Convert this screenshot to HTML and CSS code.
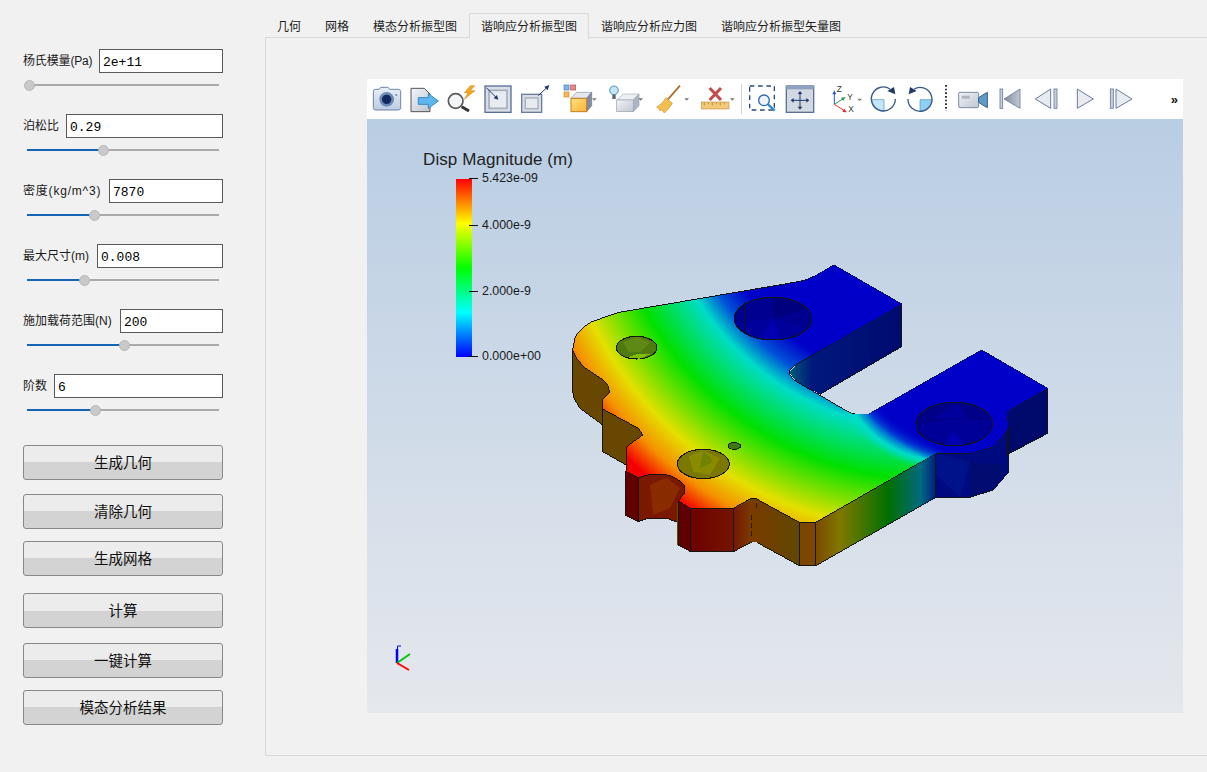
FILE: index.html
```html
<!DOCTYPE html>
<html lang="zh">
<head>
<meta charset="utf-8">
<title>谐响应分析</title>
<link rel="stylesheet" href="styles.css">
</head>
<body>
<div class="app">
  <aside class="side">
    <div class="field">
      <div class="row"><label class="lbl l-e">杨氏模量(Pa)</label><input class="inp" value="2e+11"></div>
      <div class="slider slider-first"><div class="fill" style="width:1px"><span class="thumb"></span></div></div>
    </div>
    <div class="field">
      <div class="row"><label class="lbl l-p">泊松比</label><input class="inp" value="0.29"></div>
      <div class="slider"><div class="fill" style="width:76px"><span class="thumb"></span></div></div>
    </div>
    <div class="field">
      <div class="row"><label class="lbl l-d">密度(kg/m^3)</label><input class="inp" value="7870"></div>
      <div class="slider"><div class="fill" style="width:67.5px"><span class="thumb"></span></div></div>
    </div>
    <div class="field">
      <div class="row"><label class="lbl l-s">最大尺寸(m)</label><input class="inp" value="0.008"></div>
      <div class="slider"><div class="fill" style="width:57.5px"><span class="thumb"></span></div></div>
    </div>
    <div class="field">
      <div class="row"><label class="lbl l-n">施加载荷范围(N)</label><input class="inp" value="200"></div>
      <div class="slider"><div class="fill" style="width:97px"><span class="thumb"></span></div></div>
    </div>
    <div class="field">
      <div class="row"><label class="lbl l-o">阶数</label><input class="inp" value="6"></div>
      <div class="slider"><div class="fill" style="width:68.5px"><span class="thumb"></span></div></div>
    </div>
    <div class="btns">
      <button class="btn">生成几何</button>
      <button class="btn gap14">清除几何</button>
      <button class="btn gap12">生成网格</button>
      <button class="btn gap17">计算</button>
      <button class="btn gap15">一键计算</button>
      <button class="btn gap12">模态分析结果</button>
    </div>
  </aside>

  <main class="main">
    <nav class="tabs">
      <span class="tab">几何</span>
      <span class="tab">网格</span>
      <span class="tab">模态分析振型图</span>
      <span class="tab tab-on">谐响应分析振型图</span>
      <span class="tab">谐响应分析应力图</span>
      <span class="tab">谐响应分析振型矢量图</span>
    </nav>
    <section class="pane">
      <div class="viewer">
        <div class="toolbar">
          <svg class="ic" viewBox="6 12 117 120">
            <defs><linearGradient id="gb" x1="0" y1="0" x2="0" y2="1"><stop offset="0" stop-color="#e9eff7"/><stop offset="1" stop-color="#bccde3"/></linearGradient>
            <linearGradient id="gg" x1="0" y1="0" x2="1" y2="1"><stop offset="0" stop-color="#f2f4f7"/><stop offset="1" stop-color="#bfc6d1"/></linearGradient>
            <linearGradient id="gy" x1="0" y1="0" x2="1" y2="1"><stop offset="0" stop-color="#ffe27a"/><stop offset="1" stop-color="#fbb13c"/></linearGradient>
            <linearGradient id="gt" x1="0" y1="0" x2="1" y2="0"><stop offset="0" stop-color="#7f8a9c"/><stop offset="1" stop-color="#c2c9d4"/></linearGradient></defs>
            <path d="M25 50 q0-7 7-7 h10 l5-6 h22 l5 6 h26 q7 0 7 7 v48 q0 7-7 7 h-68 q-7 0-7-7z" fill="url(#gb)" stroke="#6d85a8" stroke-width="3"/>
            <circle cx="65" cy="73" r="22" fill="#6d8ab5"/><circle cx="65" cy="73" r="14" fill="#14285f"/><circle cx="94" cy="60" r="3" fill="#6d85a8"/>
          </svg>
          <svg class="ic" viewBox="123 12 111 120">
            <path d="M138 40 h40 l17 17 v53 h-57z" fill="url(#gg)" stroke="#555" stroke-width="3"/>
            <path d="M160 68 h30 v-12 l30 22 -30 22 v-12 h-30z" fill="#5fb8ec" stroke="#2f88c8" stroke-width="3"/>
          </svg>
          <svg class="ic" viewBox="234 12 108 120">
            <path d="M316 32 l-18 21 h11 l-11 20 32-26 h-14 l13-15z" fill="#f5a623" stroke="#d08010" stroke-width="1.5"/>
            <circle cx="272" cy="78" r="22" fill="#f4f5f7" stroke="#5a5a5a" stroke-width="5"/>
            <path d="M290 95 L312 108" stroke="#333" stroke-width="9"/>
          </svg>
          <svg class="ic" viewBox="342 12 111 120">
            <rect x="360" y="33" width="78" height="79" fill="#d9dee6" stroke="#5a6f95" stroke-width="4"/>
            <rect x="372" y="46" width="54" height="54" fill="#e8ebf0" stroke="#a6aeba" stroke-width="5"/>
            <path d="M364 38 L394 68" stroke="#1f3a66" stroke-width="3"/><path d="M400 74 L386 70 L396 60z" fill="#1f3a66"/>
          </svg>
          <svg class="ic" viewBox="453 12 114 120">
            <rect x="470" y="58" width="60" height="54" fill="#d9dee6" stroke="#6b7d9b" stroke-width="4"/>
            <rect x="481" y="69" width="38" height="32" fill="#e8ebf0" stroke="#a6aeba" stroke-width="4"/>
            <path d="M520 62 L546 37" stroke="#1f3a66" stroke-width="3"/><path d="M553 30 L538 35 L548 46z" fill="#1f3a66"/>
          </svg>
          <svg class="ic ic-wide" viewBox="567 12 138 120">
            <rect x="597" y="30" width="15" height="15" fill="#7fb4e6" stroke="#3f7fc0" stroke-width="2"/>
            <rect x="617" y="30" width="15" height="15" fill="#e88a8a" stroke="#c04a4a" stroke-width="2"/>
            <rect x="597" y="51" width="15" height="15" fill="#f5b85a" stroke="#d08a2a" stroke-width="2"/>
            <path d="M618 70 L635 52 H680 L665 70z" fill="#e4e7ec" stroke="#8a97ab" stroke-width="2"/>
            <path d="M665 70 L680 52 V92 L665 110z" fill="#7f8da3" stroke="#6a788e" stroke-width="2"/>
            <rect x="618" y="70" width="47" height="40" fill="url(#gy)" stroke="#c77a20" stroke-width="3"/>
            <path class="drop" d="M681 70 h14 l-7 7z"/>
          </svg>
          <svg class="ic ic-wide" viewBox="705 12 150 120">
            <path d="M755 75 L775 57 H822 L805 75z" fill="#eceff3" stroke="#a8b0bc" stroke-width="2"/>
            <path d="M805 75 L822 57 V92 L805 110z" fill="#aeb6c3" stroke="#98a1af" stroke-width="2"/>
            <rect x="755" y="75" width="50" height="35" fill="url(#gg)" stroke="#98a1af" stroke-width="2"/>
            <circle cx="747" cy="46" r="13" fill="#c5e4f7" stroke="#4b90c0" stroke-width="3"/>
            <rect x="742" y="59" width="10" height="13" fill="#5a6472"/>
            <path class="drop" d="M820 70 h14 l-7 7z"/>
          </svg>
          <svg class="ic ic-wide" viewBox="855 12 132 120">
            <path d="M945 32 L908 74" stroke="#b06a20" stroke-width="5"/>
            <path d="M903 68 L922 85 Q912 102 898 114 L890 104 L886 108 L880 100 L875 96 Q892 88 903 68z" fill="#f3bf4f" stroke="#d0902a" stroke-width="2"/>
            <path class="drop" d="M958 70 h14 l-7 7z"/>
          </svg>
          <svg class="ic ic-wide" viewBox="987 12 120 120">
            <path d="M1034 39 L1068 75 M1068 39 L1034 75" stroke="#c44a4a" stroke-width="9"/>
            <rect x="1009" y="81" width="83" height="21" fill="#f2c879" stroke="#c9954a" stroke-width="2"/>
            <path d="M1018 82 v9 M1030 82 v6 M1042 82 v9 M1054 82 v6 M1066 82 v9 M1078 82 v6" stroke="#a87a30" stroke-width="2"/>
            <path class="drop" d="M1095 70 h14 l-7 7z"/>
          </svg>
          <span class="sep"></span>
          <svg class="ic" viewBox="1149 12 84 120">
            <rect x="1154" y="33" width="74" height="72" fill="none" stroke="#2a4a7a" stroke-width="4" stroke-dasharray="14 11"/>
            <circle cx="1197" cy="76" r="16" fill="#eef3f8" stroke="#2a6aa8" stroke-width="4"/>
            <path d="M1209 88 L1229 107" stroke="#2a8ad8" stroke-width="7"/>
          </svg>
          <svg class="ic ic-wide" viewBox="-12 12 138 120">
            <rect x="19" y="33" width="82" height="79" fill="#d3d9e3" stroke="#5a7099" stroke-width="4"/>
            <rect x="19" y="33" width="82" height="10" fill="#8fa3c0"/>
            <path d="M38 76 H82 M60 54 V98" stroke="#1f3a66" stroke-width="3"/>
            <path d="M60 48 l-7 9 h14z M60 104 l-7-9 h14z M32 76 l9-7 v14z M88 76 l-9-7 v14z" fill="#1f3a66"/>
          </svg>
          <svg class="ic ic-wide" viewBox="126 12 126 120">
            <path d="M163 88 V56" stroke="#2a5ac8" stroke-width="3"/><path d="M163 46 l-6 12 h12z" fill="#2a5ac8"/>
            <path d="M163 88 L188 72" stroke="#2a9a4a" stroke-width="3"/><path d="M197 66 l-14 2 6 10z" fill="#2a9a4a"/>
            <path d="M163 88 L192 106" stroke="#e03030" stroke-width="3"/><path d="M201 112 l-14-1 6-10z" fill="#e03030"/>
            <text class="axlbl" x="170" y="50">Z</text><text class="axlbl" x="202" y="74">Y</text><text class="axlbl" x="205" y="111">X</text>
            <path class="drop" d="M232 71 h14 l-7 7z"/>
          </svg>
          <svg class="ic" viewBox="252 12 111 120">
            <path d="M276 74 H312 V108 A36 36 0 0 1 276 74z" fill="#c4e6f9" stroke="#4b90c0" stroke-width="2"/>
            <path d="M330 42 A36 36 0 1 0 346 72" fill="none" stroke="#3a5a82" stroke-width="4"/>
            <path d="M346 58 L342 36 L322 48z" fill="#1f3a66"/>
          </svg>
          <svg class="ic" viewBox="363 12 111 120">
            <path d="M420 74 H456 A36 36 0 0 1 420 108z" fill="#8ed0f5" stroke="#4b90c0" stroke-width="2"/>
            <path d="M402 42 A36 36 0 1 1 384 72" fill="none" stroke="#3a5a82" stroke-width="4"/>
            <path d="M386 58 L390 36 L410 48z" fill="#1f3a66"/>
          </svg>
          <svg class="ic" viewBox="474 12 48 120">
            <path d="M498 30 V108" stroke="#111" stroke-width="5" stroke-dasharray="5 6"/>
          </svg>
          <svg class="ic" viewBox="522 12 114 120">
            <rect x="536" y="52" width="60" height="46" rx="4" fill="url(#gg)" stroke="#7a8ba5" stroke-width="3"/>
            <rect x="545" y="62" width="24" height="9" fill="#aeb6c3"/>
            <path d="M596 68 L608 60 L622 52 V98 L608 90 L596 82z" fill="#5b9cc8" stroke="#3a5a82" stroke-width="3"/>
          </svg>
          <svg class="ic" viewBox="636 12 108 120">
            <rect x="660" y="42" width="8" height="58" fill="#c8d0dc" stroke="#6a7d9c" stroke-width="2.5"/>
            <path d="M720 42 L672 72 L720 100z" fill="url(#gt)" stroke="#6a7d9c" stroke-width="2.5"/>
          </svg>
          <svg class="ic" viewBox="744 12 114 120">
            <path d="M812 42 L766 72 L812 100z" fill="#e8ecf1" stroke="#6a7d9c" stroke-width="3"/>
            <rect x="822" y="42" width="9" height="58" fill="#c8d0dc" stroke="#6a7d9c" stroke-width="2.5"/>
          </svg>
          <svg class="ic" viewBox="858 12 114 120">
            <path d="M892 42 L940 72 L892 100z" fill="#e8ecf1" stroke="#6a7d9c" stroke-width="3"/>
          </svg>
          <svg class="ic" viewBox="972 12 102 120">
            <rect x="991" y="42" width="9" height="58" fill="#c8d0dc" stroke="#6a7d9c" stroke-width="2.5"/>
            <path d="M1008 42 L1056 72 L1008 100z" fill="#e8ecf1" stroke="#6a7d9c" stroke-width="3"/>
          </svg>
          <span class="more">»</span>
        </div>

        <div class="scene">
          <svg class="model" viewBox="0 0 816 594">
            <defs>
              <radialGradient id="field" gradientUnits="userSpaceOnUse" cx="1113" cy="-302" r="1300">
                <stop offset="0" stop-color="#0000c8"/>
                <stop offset="0.53" stop-color="#0000c8"/>
                <stop offset="0.585" stop-color="#0050d8"/>
                <stop offset="0.635" stop-color="#00dcc8"/>
                <stop offset="0.75" stop-color="#00e000"/>
                <stop offset="0.873" stop-color="#e4e000"/>
                <stop offset="0.935" stop-color="#f59000"/>
                <stop offset="0.99" stop-color="#f50000"/>
                <stop offset="1" stop-color="#f50000"/>
              </radialGradient>
              <radialGradient id="lobe" gradientUnits="userSpaceOnUse" cx="1150" cy="300" r="345">
                <stop offset="0" stop-color="#0000c8"/>
                <stop offset="0.7" stop-color="#0000c8"/>
                <stop offset="0.82" stop-color="#0050d8"/>
                <stop offset="0.92" stop-color="#00dcc8"/>
                <stop offset="1" stop-color="#00dcc8" stop-opacity="0"/>
              </radialGradient>
              <radialGradient id="farside" gradientUnits="userSpaceOnUse" cx="1500" cy="-100" r="820">
                <stop offset="0" stop-color="#0000c8"/>
                <stop offset="0.94" stop-color="#0000c8"/>
                <stop offset="1" stop-color="#0000c8" stop-opacity="0"/>
              </radialGradient>
              <linearGradient id="wallR" gradientUnits="userSpaceOnUse" x1="768" y1="0" x2="1130" y2="0">
                <stop offset="0" stop-color="#7a4a00"/><stop offset="0.2" stop-color="#807800"/>
                <stop offset="0.6" stop-color="#007000"/><stop offset="0.87" stop-color="#006a80"/><stop offset="1" stop-color="#001a80"/>
              </linearGradient>
              <linearGradient id="wallIn" gradientUnits="userSpaceOnUse" x1="690" y1="0" x2="1025" y2="0">
                <stop offset="0" stop-color="#005a78"/><stop offset="0.2" stop-color="#00187c"/><stop offset="1" stop-color="#000a70"/>
              </linearGradient>
              <linearGradient id="wallM" gradientUnits="userSpaceOnUse" x1="392" y1="0" x2="718" y2="0">
                <stop offset="0" stop-color="#6e0000"/><stop offset="0.38" stop-color="#741400"/><stop offset="0.55" stop-color="#7a3a00"/><stop offset="1" stop-color="#604800"/>
              </linearGradient>
              <path id="topface" d="M822 30 L1025 147 L715 325 Q688 340 688 353 Q692 370 710 380 L860 468 Q875 478 890 478 H925 L1265 285 L1463 400 L1340 470 L1345 520 L1300 575 L1230 595 H1128 L768 802 H718 L590 732 H570 L520 760 H392 L355 738 L375 712 L372 690 Q350 665 320 660 H265 L235 668 L198 650 L200 575 L248 540 L235 520 L128 462 V432 L148 412 L145 392 L125 372 L70 335 Q50 315 38 285 L45 250 L52 235 Q70 215 95 200 L178 172 L715 80 Q745 75 770 60 L822 30z"/>
              <clipPath id="holeA"><ellipse cx="639" cy="191" rx="116" ry="64"/></clipPath>
              <clipPath id="holeB"><ellipse cx="1183" cy="507" rx="115" ry="65"/></clipPath>
            </defs>
            <g class="part" transform="translate(193 136) scale(0.3333)">
              <g class="walls">
                <path d="M38 285 V410 L42 430 L60 460 L128 510 V590 L198 630 V782 L235 800 L265 790 H320 L352 802 V870 L392 890 H520 L575 862 H590 L718 932 H768 V802 L400 400z" fill="#684800"/>
                <path d="M198 575 L248 540 V640 L198 630z" fill="#5e3c00"/>
                <path d="M198 650 L235 668 V800 L198 782z" fill="#600000"/>
                <path d="M235 668 L265 650 H320 L385 680 L375 745 L352 745 V802 L320 790 H265 L235 800z" fill="#7a1800"/>
                <path d="M270 690 L320 668 L360 700 L330 760 L280 780z" fill="#882c00"/>
                <path d="M355 738 L392 760 V890 L355 870z" fill="#600000"/>
                <path d="M392 760 H520 L590 732 L718 802 V932 L590 862 L575 862 L520 890 H392z" fill="url(#wallM)"/>
                <path d="M718 802 H768 V932 H718z" fill="#7a4600"/>
                <path d="M768 802 L1128 595 V727 L768 932z" fill="url(#wallR)"/>
                <path d="M1128 595 H1230 L1345 520 L1345 652 L1300 705 L1230 727 H1128z" fill="#000a80"/>
                <path d="M1128 595 L1230 620 L1200 727 L1128 660z" fill="#00128a"/>
                <path d="M1230 620 L1340 630 L1300 700 L1230 727z" fill="#000c70"/>
                <path d="M1340 470 L1463 400 V535 L1340 600z" fill="#000a6c"/>
                <path d="M1025 147 L715 325 L688 353 L710 380 L780 418 L1025 275z" fill="url(#wallIn)"/>
                <path class="edge" d="M198 650 V782 L235 800 V668 M235 800 L265 790 H320 L352 802 M355 738 V870 L392 890 V760 M392 890 H520 V760 M520 890 L575 862 M590 862 L718 932 V802 M718 932 H768 V802 M768 932 L1128 727 V595 M1128 727 H1230 L1300 705 L1345 652 V520 M1340 600 L1463 535 V400 M1340 470 V600 M780 418 L1025 275 V147 M128 462 V590 L198 630 M128 510 L60 460 L42 430 L38 410 V285"/>
                <path class="dash" d="M590 745 V760 M575 780 V845"/>
              </g>
              <use href="#topface" class="top" fill="url(#field)"/>
              <use href="#topface" fill="url(#lobe)"/>
              <use href="#topface" fill="url(#farside)"/>
              <g class="holes">
                <ellipse class="edge-fill" cx="639" cy="191" rx="116" ry="64" fill="#000090"/>
                <g clip-path="url(#holeA)">
                  <path d="M530 205 L640 190 L750 225 L680 255 H600z" fill="#00009c"/>
                  <path d="M600 255 L640 190 L660 255z" fill="#0000b0"/>
                  <path d="M640 127 H690 L740 160 L640 190z" fill="#00007e"/>
                </g>
                <ellipse class="edge-line" cx="639" cy="191" rx="116" ry="64"/>
                <path class="edge" d="M555 142 V235"/>
                <ellipse class="edge-fill" cx="1183" cy="507" rx="115" ry="65" fill="#000088"/>
                <g clip-path="url(#holeB)">
                  <path d="M1070 510 L1185 490 L1298 500 L1280 560 H1090z" fill="#000098"/>
                  <path d="M1150 572 L1180 530 L1220 572z" fill="#0000b0"/>
                  <path d="M1120 490 L1190 445 L1225 490z" fill="#00009c"/>
                </g>
                <ellipse class="edge-line" cx="1183" cy="507" rx="115" ry="65"/>
                <ellipse class="edge-fill" cx="230" cy="278" rx="61" ry="34" fill="#4e7a10"/>
                <path d="M190 262 L230 245 L270 262 L240 292 L205 290z" fill="#5e8a14"/>
                <path d="M205 308 Q230 292 270 298 L240 311z" fill="#7cc000"/>
                <ellipse class="edge-fill" cx="430" cy="627" rx="78" ry="44" fill="#7a7800"/>
                <path d="M385 605 L430 585 L480 610 L450 660 L400 650z" fill="#8a8a00"/>
                <path d="M430 585 L460 620 L420 640z" fill="#6e8400"/>
                <ellipse class="edge-fill" cx="523" cy="573" rx="19" ry="10" fill="#3f7a10"/>
              </g>
            </g>
            <g class="triad">
              <path d="M30 544 V530" stroke="#0000ff" stroke-width="2.5"/>
              <path d="M30.5 531 V527 H34" stroke="#0000ff" stroke-width="1" fill="none"/>
              <path d="M30 544 L43 535" stroke="#00c800" stroke-width="2"/>
              <path d="M30 544 L42 551" stroke="#ff0000" stroke-width="2"/>
            </g>
          </svg>
          <div class="legend">
            <div class="legend-title">Disp Magnitude (m)</div>
            <div class="scale">
              <div class="tick" style="top:-1px"><i></i><span>5.423e-09</span></div>
              <div class="tick" style="top:46px"><i></i><span>4.000e-9</span></div>
              <div class="tick" style="top:112px"><i></i><span>2.000e-9</span></div>
              <div class="tick" style="top:177px"><i></i><span>0.000e+00</span></div>
            </div>
          </div>
        </div>
      </div>
    </section>
  </main>
</div>
</body>
</html>
```
FILE: styles.css
```css
* { box-sizing: border-box; }
html, body { margin: 0; height: 100%; }
body {
  background: #f1f1f1;
  font-family: "Liberation Sans", "Noto Sans CJK SC", sans-serif;
  overflow: hidden;
}
.app { display: flex; width: 1207px; height: 772px; }

/* left column */
.side { width: 265px; flex: none; padding: 49px 42px 0 23px; }
.field { height: 65px; }
.row { display: flex; align-items: center; gap: 7px; height: 24px; }
.lbl { flex: none; font-size: 12px; color: #1a1a1a; white-space: nowrap; margin-bottom: 4px; }
.l-e { width: 69px; letter-spacing: -0.15px; }
.l-p { width: 36px; }
.l-d { width: 79px; letter-spacing: 0.8px; }
.l-s { width: 67px; }
.l-n { width: 90px; }
.l-o { width: 24px; }
.inp {
  flex: 1; min-width: 0; height: 24px;
  border: 1px solid #5a5a5a; background: #fff; padding: 2px 3px 0;
  font: 13px "Liberation Mono", monospace; color: #000; outline: none;
}
.slider { position: relative; margin: 11px 4px 0 4px; height: 2px; background: #aaa; }
.slider-first { margin-left: 5px; }
.fill { position: relative; height: 2px; background: #1565b5; }
.thumb {
  position: absolute; right: -5.5px; top: -4.5px; width: 11px; height: 11px;
  border-radius: 50%; background: #c9c9c9; border: 1px solid #b8b8b8;
}
.btns { display: flex; flex-direction: column; margin-top: 6px; }
.btn {
  height: 35px; padding: 0 0 3px; border: 1px solid #888; border-radius: 3px;
  background: linear-gradient(#ececec 0 50%, #d3d3d3 50% 100%);
  font-family: "Noto Sans CJK SC", sans-serif; font-size: 14.5px; color: #111;
}
.gap12 { margin-top: 12px; }
.gap14 { margin-top: 14px; }
.gap15 { margin-top: 15px; }
.gap17 { margin-top: 17px; }

/* tabs */
.main { flex: 1; min-width: 0; display: flex; flex-direction: column; padding-top: 13px; padding-bottom: 16px; }
.tabs { display: flex; height: 25px; flex: none; margin-bottom: -1px; position: relative; }
.tab {
  padding: 1px 12px 0; line-height: 24px; font-size: 12px; color: #1c1c1c;
  font-family: "Noto Sans CJK SC", sans-serif;
}
.tab-on { border: 1px solid #dadada; border-bottom: 0; background: #f1f1f1; padding: 0 11px; height: 26px; }
.pane {
  flex: 1; min-height: 0; border: 1px solid #dadada; border-right: 0;
  padding: 41px 24px 42px 101px; display: flex;
}

/* viewer */
.viewer { flex: 1; min-width: 0; display: flex; flex-direction: column; }
.toolbar {
  display: grid; height: 40px; flex: none; background: #fff; align-items: center;
  grid-template-columns: 39px 37px 36px 37px 38px 46px 50px 44px 40px 14px 28px 46px 42px 37px 37px 16px 38px 36px 38px 38px 34px 1fr;
}
.ic { display: block; width: 100%; height: 40px; overflow: visible; }
.drop { fill: #777; }
.sep { display: block; width: 1px; height: 30px; background: #d2d2d2; justify-self: center; }
.axlbl { font: 25px "Liberation Sans", sans-serif; fill: #333; }
.more { font: bold 13px "Liberation Sans", sans-serif; color: #111; justify-self: end; padding-right: 5px; }

.scene {
  position: relative; flex: 1; min-height: 0;
  background: linear-gradient(#b9cde3, #e5e8ed);
}
.model { position: absolute; left: 0; top: 0; width: 816px; height: 594px; }
.part { shape-rendering: crispEdges; }
.edge { fill: none; stroke: #141414; stroke-width: 3; }
.edge-fill { stroke: #141414; stroke-width: 3.2; }
.edge-line { fill: none; stroke: #141414; stroke-width: 3.2; }
.dash { fill: none; stroke: #2a1a00; stroke-width: 3; stroke-dasharray: 14 10; }
.top { stroke: #141414; stroke-width: 3; }

.legend { position: absolute; left: 56px; top: 29px; width: 170px; color: #1a1a1a; }
.legend-title { font-size: 17px; line-height: 22px; padding-top: 1px; white-space: nowrap; color: #222; letter-spacing: 0.1px; }
.scale {
  position: absolute; left: 33px; top: 31px; width: 16px; height: 178px;
  background: linear-gradient(#ff0000, #ffff00 25%, #00ff00 50%, #00ffff 75%, #0000ff);
}
.tick { position: absolute; left: 13px; display: flex; align-items: center; height: 1px; }
.tick i { display: block; width: 9px; height: 1px; background: #111; margin-right: 4px; flex: none; }
.tick span { font-size: 12.4px; white-space: nowrap; margin-bottom: 2px; }
```
